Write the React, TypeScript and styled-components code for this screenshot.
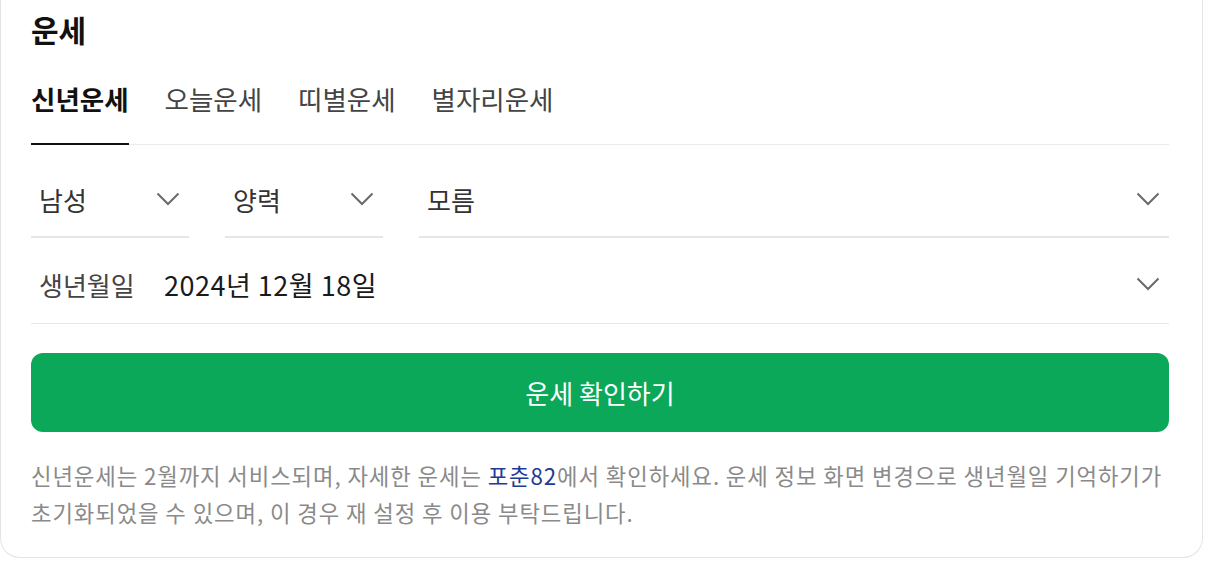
import React, { useState } from "react";
import styled, { createGlobalStyle } from "styled-components";

const GlobalStyle = createGlobalStyle`
  html, body {
    margin: 0;
    padding: 0;
    background: #ffffff;
  }
  body {
    font-family: "Noto Sans CJK KR", "Noto Sans", Roboto, sans-serif;
    -webkit-font-smoothing: antialiased;
  }
`;

const Card = styled.section`
  box-sizing: border-box;
  width: 1203px;
  height: 558px;
  padding: 0 33px 0 30px;
  background: #ffffff;
  border: 1px solid #e4e4e4;
  border-top: none;
  border-radius: 0 0 20px 20px;
`;

const Title = styled.h2`
  margin: 0;
  padding-top: 8px;
  height: 48px;
  font-size: 30px;
  font-weight: 700;
  line-height: 42px;
  color: #111111;
`;

const Tabs = styled.nav`
  display: flex;
  gap: 36px;
  margin-top: 22px;
  border-bottom: 1px solid #ebebeb;
`;

const Tab = styled.button<{ $active?: boolean }>`
  appearance: none;
  background: none;
  border: none;
  padding: 0 0 23px;
  margin: 0 0 -1px;
  font-family: inherit;
  font-size: 26.5px;
  line-height: 42px;
  font-weight: ${(p) => (p.$active ? 700 : 400)};
  color: ${(p) => (p.$active ? "#111111" : "#444444")};
  border-bottom: 2px solid ${(p) => (p.$active ? "#111111" : "transparent")};
  cursor: pointer;
`;

const SelectRow = styled.div`
  display: flex;
  gap: 36px;
`;

const Select = styled.div<{ $grow?: boolean }>`
  display: flex;
  align-items: center;
  justify-content: space-between;
  box-sizing: border-box;
  height: 93px;
  padding: 17px 9px 0 8px;
  border-bottom: 2px solid #e6e6e6;
  ${(p) => (p.$grow ? "flex: 1;" : "width: 158px;")}
`;

const SelectText = styled.span`
  font-size: 26px;
  color: #333333;
`;

const DateRow = styled.div`
  display: flex;
  align-items: center;
  box-sizing: border-box;
  height: 86px;
  padding: 7px 9px 0 8px;
  border-bottom: 1px solid #e6e6e6;
`;

const DateLabel = styled.span`
  font-size: 26px;
  color: #444444;
  width: 125px;
`;

const DateValue = styled.span`
  flex: 1;
  font-size: 27px;
  color: #1a1a1a;
  letter-spacing: 0.5px;
`;

const ConfirmButton = styled.button`
  display: block;
  width: 100%;
  height: 79px;
  margin-top: 29px;
  border: none;
  border-radius: 12px;
  background: #0ca85a;
  color: #ffffff;
  font-family: inherit;
  font-size: 26px;
  cursor: pointer;
`;

const Notice = styled.p`
  margin: 25px 0 0;
  font-size: 22.3px;
  line-height: 37px;
  letter-spacing: 0.9px;
  color: #8a8a8a;
`;

const Link = styled.a`
  color: #1d3b97;
  text-decoration: none;
`;

const Chevron: React.FC = () => (
  <svg width="24" height="14" viewBox="0 0 24 14" fill="none">
    <path d="M1.5 1.5 L12 12 L22.5 1.5" stroke="#6a6a6a" strokeWidth="2" />
  </svg>
);

const tabs = ["신년운세", "오늘운세", "띠별운세", "별자리운세"];

const App: React.FC = () => {
  const [active, setActive] = useState(0);

  return (
    <>
      <GlobalStyle />
      <Card>
        <Title>운세</Title>
        <Tabs>
          {tabs.map((label, i) => (
            <Tab key={label} $active={i === active} onClick={() => setActive(i)}>
              {label}
            </Tab>
          ))}
        </Tabs>
        <SelectRow>
          <Select>
            <SelectText>남성</SelectText>
            <Chevron />
          </Select>
          <Select>
            <SelectText>양력</SelectText>
            <Chevron />
          </Select>
          <Select $grow>
            <SelectText>모름</SelectText>
            <Chevron />
          </Select>
        </SelectRow>
        <DateRow>
          <DateLabel>생년월일</DateLabel>
          <DateValue>2024년 12월 18일</DateValue>
          <Chevron />
        </DateRow>
        <ConfirmButton>운세 확인하기</ConfirmButton>
        <Notice>
          신년운세는 2월까지 서비스되며, 자세한 운세는 <Link href="#">포춘82</Link>에서
          확인하세요. 운세 정보 화면 변경으로 생년월일 기억하기가
          <br />
          초기화되었을 수 있으며, 이 경우 재 설정 후 이용 부탁드립니다.
        </Notice>
      </Card>
    </>
  );
};

export default App;
